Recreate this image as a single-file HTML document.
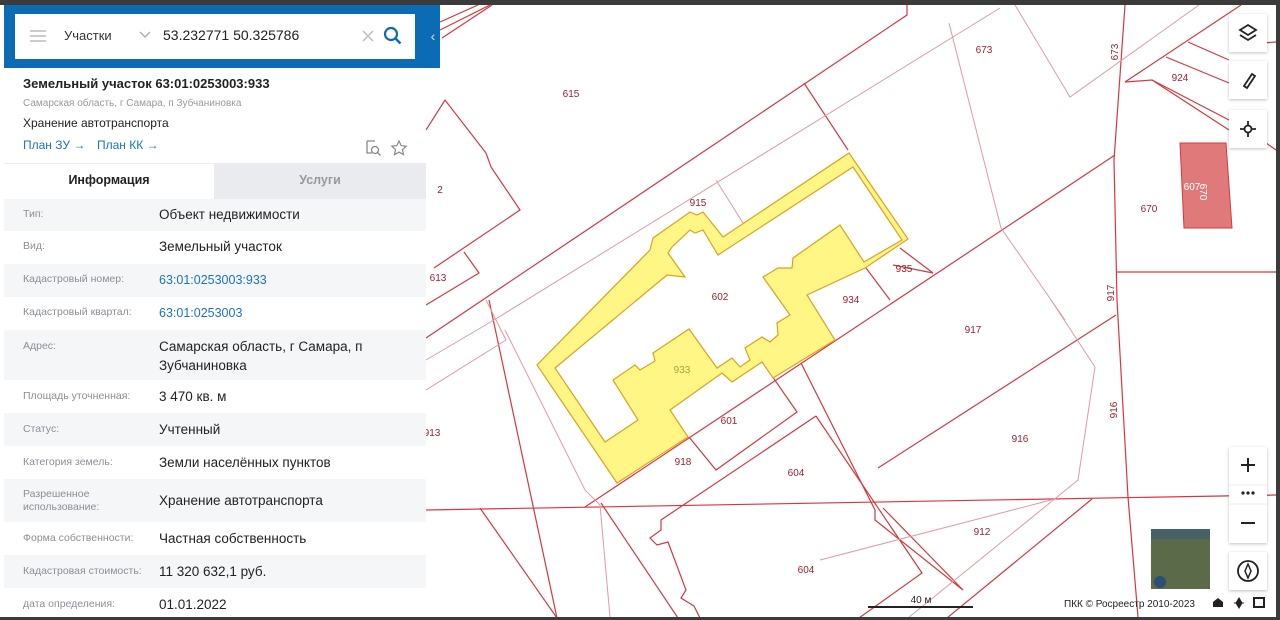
<!DOCTYPE html>
<html><head><meta charset="utf-8">
<style>
*{margin:0;padding:0;box-sizing:border-box}
body{width:1280px;height:620px;overflow:hidden;background:#3b3b3b;font-family:"Liberation Sans","Noto Sans CJK SC",sans-serif;position:relative}
#map{position:absolute;left:0;top:5px;width:1276px;height:612px;background:#fff;overflow:hidden}
#map svg{position:absolute;left:0;top:-5px}
#panel{position:absolute;left:4px;top:5px;width:422px;height:612px;background:#fff;overflow:hidden}
#hdr{position:absolute;left:4px;top:5px;width:436px;height:63px;background:#0b6cb5}
#tab{position:absolute;left:426px;top:5px;width:14px;height:63px;background:#0b6cb5;color:#cfe3f5;font-size:14px;line-height:63px;text-align:center}
#search{position:absolute;left:15px;top:14px;width:400px;height:45px;background:#fff}
.t{position:absolute;white-space:nowrap}
.row{position:absolute;left:0;width:422px}
.row.s{background:#f5f6f8}
.lab{position:absolute;left:19px;font-size:10.5px;color:#8a8f96;line-height:13px}
.val{position:absolute;left:155px;font-size:13.5px;color:#222;line-height:19px}
.blue{color:#1a73c4}
.btn{position:absolute;left:1229px;width:38px;height:38px;background:#fff;box-shadow:0 1px 3px rgba(0,0,0,.25)}
</style></head><body>
<div id="map">
<svg width="1276" height="620" viewBox="0 0 1276 620">
<g fill="none" stroke="#d9363e" stroke-width="1.2">
<polyline points="907,5 907,15 426,338"/>
<polyline points="440,22 478,5"/><polyline points="440,30 490,5"/><polyline points="442,38 492,5"/>
<polyline points="1115,155 585,507"/>
<polyline points="1116,315 878,468"/>
<polyline points="426,510 1276,495"/>
<polyline points="1117,272 1276,272"/>
<polyline points="1125,5 1114,160 1117,300 1128,497 1138,617"/>
<polyline points="816,416 922,573 859,618"/>
<polyline points="816,416 661,520 661,530 650,538 657,545 668,542 686,590 681,598 694,606 700,618"/>
<polyline points="763,363 797,412 716,470 689,437"/>
<polyline points="801,363 875,510 875,520 963,590"/>
<polyline points="883,508 963,590"/>
<polyline points="1092,499 947,618"/>
<polyline points="489,300 557,618"/>
<polyline points="601,503 678,618"/>
<polyline points="480,508 557,618"/>
<polyline points="426,130 445,100 486,153 491,167 520,210 434,268"/>
<polyline points="464,252 479,273 426,305"/>
<polyline points="804,83 848,150"/>
<polyline points="1241,5 1125,82"/>
<polyline points="1152,80 1229,120"/><polyline points="1166,57 1229,83"/><polyline points="1188,42 1229,60"/>
<polyline points="1125,82 1152,80 1229,130"/>
<polyline points="1262,43 1276,42"/>
<polyline points="1262,140 1276,150"/>
<polyline points="866,268 890,300"/><polyline points="893,265 933,273"/>
<polyline points="900,248 933,273"/>
</g>
<g fill="none" stroke="#e39aa0" stroke-width="1">
<polyline points="1000,8 494,320 426,360"/>
<polyline points="949,23 1001,228 1065,320"/>
<polyline points="1051,300 1095,367 1078,480 908,618"/>
<polyline points="1015,5 1070,97 1199,5"/>
<polyline points="716,180 743,223"/>
<polyline points="486,300 506,340 426,390"/>
<polyline points="505,330 585,490 600,505 610,617"/>
<polyline points="820,560 1051,500"/>
</g>
<path fill-rule="evenodd" fill="#fff685" stroke="#e0a020" stroke-width="1.2" d="M849,153 L908,239 L865,268 L807,295 L835,340 L773,378 L762,362 L732,382 L722,373 L670,410 L688,437 L617,483 L537,365 L650,250 L653,238 L690,212 L697,215 L703,212 L723,237 Z M853,167 L902,240 L864,262 L840,225 L793,258 L792,268 L778,268 L763,277 L790,315 L777,323 L778,335 L770,342 L762,337 L745,348 L750,360 L740,367 L732,358 L717,368 L689,329 L653,353 L655,361 L640,370 L635,365 L613,380 L638,420 L605,442 L555,368 L667,275 L685,277 L668,253 L672,247 L690,230 L695,233 L703,230 L718,255 Z"/>
<polygon points="1180,143 1226,143 1232,228 1184,228" fill="#e07a7a" stroke="#d9363e"/>
<g fill="#a0202a" font-family="Liberation Sans" font-size="10" text-anchor="middle">
<text x="571" y="97">615</text><text x="984" y="53">673</text>
<text x="1180" y="81">924</text><text x="440" y="193">2</text>
<text x="698" y="206">915</text><text x="904" y="272">935</text>
<text x="720" y="300">602</text><text x="851" y="303">934</text>
<text x="973" y="333">917</text><text x="1149" y="212">670</text>
<text x="438" y="281">613</text><text x="729" y="424">601</text>
<text x="432" y="436">913</text><text x="683" y="465">918</text>
<text x="1020" y="442">916</text><text x="796" y="476">604</text>
<text x="982" y="535">912</text><text x="806" y="573">604</text>
<text x="682" y="373" fill="#b0a040">933</text>
<text x="1192" y="190" fill="#fff">607</text>
<text transform="translate(1118,52) rotate(-90)">673</text>
<text transform="translate(1114,293) rotate(-90)">917</text>
<text transform="translate(1117,410) rotate(-90)">916</text>
<text transform="translate(1200,192) rotate(90)" fill="#fff">670</text>
</g>
<line x1="868" y1="607" x2="973" y2="607" stroke="#222" stroke-width="2"/>
<text x="921" y="603" font-family="Liberation Sans" font-size="10" fill="#222" text-anchor="middle">40 м</text>
<text x="1064" y="607" font-family="Liberation Sans" font-size="10" fill="#222">ПКК © Росреестр 2010-2023</text>
<path d="M1213,607 v-5 l5,-4 l5,4 v5 z" fill="#222"/>
<path d="M1239,598 l3,5 l-3,5 l-3,-5 z M1234,603 h10" fill="#222" stroke="#222"/>
<rect x="1254" y="598" width="10" height="9" fill="none" stroke="#222" stroke-width="2"/>
<rect x="1151" y="529" width="59" height="60" fill="#5b6b4a"/>
<rect x="1151" y="529" width="59" height="10" fill="#3a5c7a" opacity=".6"/>
<circle cx="1160" cy="582" r="6" fill="#2e4f75"/>
</svg>
</div>
<div class="btn" style="top:14px"><svg width="38" height="38"><path d="M19,11 l8,5 l-8,5 l-8,-5 z M11,21 l8,5 l8,-5" fill="none" stroke="#222" stroke-width="1.8"/></svg></div>
<div class="btn" style="top:61px"><svg width="38" height="38"><path d="M15,25 l8,-12 l3,2 l-8,12 z" fill="none" stroke="#222" stroke-width="1.8"/></svg></div>
<div class="btn" style="top:110px"><svg width="38" height="38"><circle cx="19" cy="19" r="3.5" fill="none" stroke="#222" stroke-width="1.8"/><path d="M19,11v5M19,22v5M11,19h5M22,19h5" stroke="#222" stroke-width="1.8"/></svg></div>
<div class="btn" style="top:447px;height:96px"><svg width="38" height="96"><path d="M12,18h14M19,11v14" stroke="#222" stroke-width="2"/><circle cx="14" cy="46" r="1.6" fill="#222"/><circle cx="19" cy="46" r="1.6" fill="#222"/><circle cx="24" cy="46" r="1.6" fill="#222"/><path d="M12,76h14" stroke="#222" stroke-width="2"/><line x1="0" y1="38" x2="38" y2="38" stroke="#eee"/><line x1="0" y1="57" x2="38" y2="57" stroke="#eee"/></svg></div>
<div class="btn" style="top:552px"><svg width="38" height="38"><circle cx="19" cy="19" r="10" fill="none" stroke="#222" stroke-width="1.8"/><path d="M19,12 l3,7 l-3,7 l-3,-7 z" fill="none" stroke="#222" stroke-width="1.5"/></svg></div>

<div id="panel">
<div class="t" style="left:19px;top:71px;font-size:13px;font-weight:bold;color:#222">Земельный участок 63:01:0253003:933</div>
<div class="t" style="left:19px;top:93px;font-size:10px;color:#999">Самарская область, г Самара, п Зубчаниновка</div>
<div class="t" style="left:19px;top:111px;font-size:12px;color:#222">Хранение автотранспорта</div>
<div class="t blue" style="left:19px;top:133px;font-size:12px">План ЗУ →</div>
<div class="t blue" style="left:93px;top:133px;font-size:12px">План КК →</div>
<svg class="t" style="left:360px;top:133px" width="48" height="20"><path d="M3,3h8M3,3v12h5" fill="none" stroke="#888" stroke-width="1.3"/><circle cx="11" cy="12" r="3.5" fill="none" stroke="#888" stroke-width="1.3"/><path d="M13.5,14.5l3,3" stroke="#888" stroke-width="1.3"/><path d="M35,3 l2.2,4.6 5,.6 -3.7,3.4 1,5 -4.5,-2.5 -4.5,2.5 1,-5 -3.7,-3.4 5,-.6z" fill="none" stroke="#888" stroke-width="1.2"/></svg>
<div class="t" style="left:0;top:158px;width:422px;border-top:1px solid #eee"></div>
<div class="t" style="left:210px;top:158px;width:212px;height:36px;background:#e9ebee"></div>
<div class="t" style="left:0;top:168px;width:210px;text-align:center;font-size:12.5px;font-weight:bold;color:#222">Информация</div>
<div class="t" style="left:210px;top:168px;width:212px;text-align:center;font-size:12.5px;font-weight:bold;color:#999">Услуги</div>

<div class="row s" style="top:194px;height:32px"><div class="lab" style="top:9px">Тип:</div><div class="val" style="top:6px">Объект недвижимости</div></div>
<div class="row" style="top:226px;height:33px"><div class="lab" style="top:9px">Вид:</div><div class="val" style="top:6px">Земельный участок</div></div>
<div class="row s" style="top:259px;height:33px"><div class="lab" style="top:9px">Кадастровый номер:</div><div class="val blue" style="top:7px;font-size:12.5px">63:01:0253003:933</div></div>
<div class="row" style="top:292px;height:33px"><div class="lab" style="top:9px">Кадастровый квартал:</div><div class="val blue" style="top:7px;font-size:12.5px">63:01:0253003</div></div>
<div class="row s" style="top:325px;height:50px"><div class="lab" style="top:10px">Адрес:</div><div class="val" style="top:7px">Самарская область, г Самара, п<br>Зубчаниновка</div></div>
<div class="row" style="top:375px;height:33px"><div class="lab" style="top:10px">Площадь уточненная:</div><div class="val" style="top:7px">3 470 кв. м</div></div>
<div class="row s" style="top:408px;height:33px"><div class="lab" style="top:10px">Статус:</div><div class="val" style="top:7px">Учтенный</div></div>
<div class="row" style="top:441px;height:33px"><div class="lab" style="top:10px">Категория земель:</div><div class="val" style="top:7px">Земли населённых пунктов</div></div>
<div class="row s" style="top:474px;height:43px"><div class="lab" style="top:9px">Разрешенное<br>использование:</div><div class="val" style="top:12px">Хранение автотранспорта</div></div>
<div class="row" style="top:517px;height:33px"><div class="lab" style="top:10px">Форма собственности:</div><div class="val" style="top:7px">Частная собственность</div></div>
<div class="row s" style="top:550px;height:33px"><div class="lab" style="top:10px">Кадастровая стоимость:</div><div class="val" style="top:7px">11 320 632,1 руб.</div></div>
<div class="row" style="top:583px;height:33px"><div class="lab" style="top:10px">дата определения:</div><div class="val" style="top:7px">01.01.2022</div></div>
</div>
<div id="hdr"></div>
<div id="tab">‹</div>
<div id="search">
<svg class="t" style="left:14px;top:15px" width="18" height="14"><path d="M1,2h16M1,7h16M1,12h16" stroke="#ccc" stroke-width="2"/></svg>
<div class="t" style="left:49px;top:14px;font-size:13px;color:#333">Участки</div>
<svg class="t" style="left:124px;top:17px" width="12" height="8"><path d="M1,1l5,5 5,-5" fill="none" stroke="#aaa" stroke-width="1.3"/></svg>
<div class="t" style="left:148px;top:13px;font-size:14px;color:#222">53.232771 50.325786</div>
<svg class="t" style="left:347px;top:16px" width="12" height="12"><path d="M1,1l10,10M11,1l-10,10" stroke="#bbb" stroke-width="1.4"/></svg>
<svg class="t" style="left:368px;top:12px" width="20" height="20"><circle cx="8" cy="8" r="6" fill="none" stroke="#0b6cb5" stroke-width="2.2"/><path d="M12.5,12.5l5,5" stroke="#0b6cb5" stroke-width="2.5"/></svg>
</div>
</body></html>
